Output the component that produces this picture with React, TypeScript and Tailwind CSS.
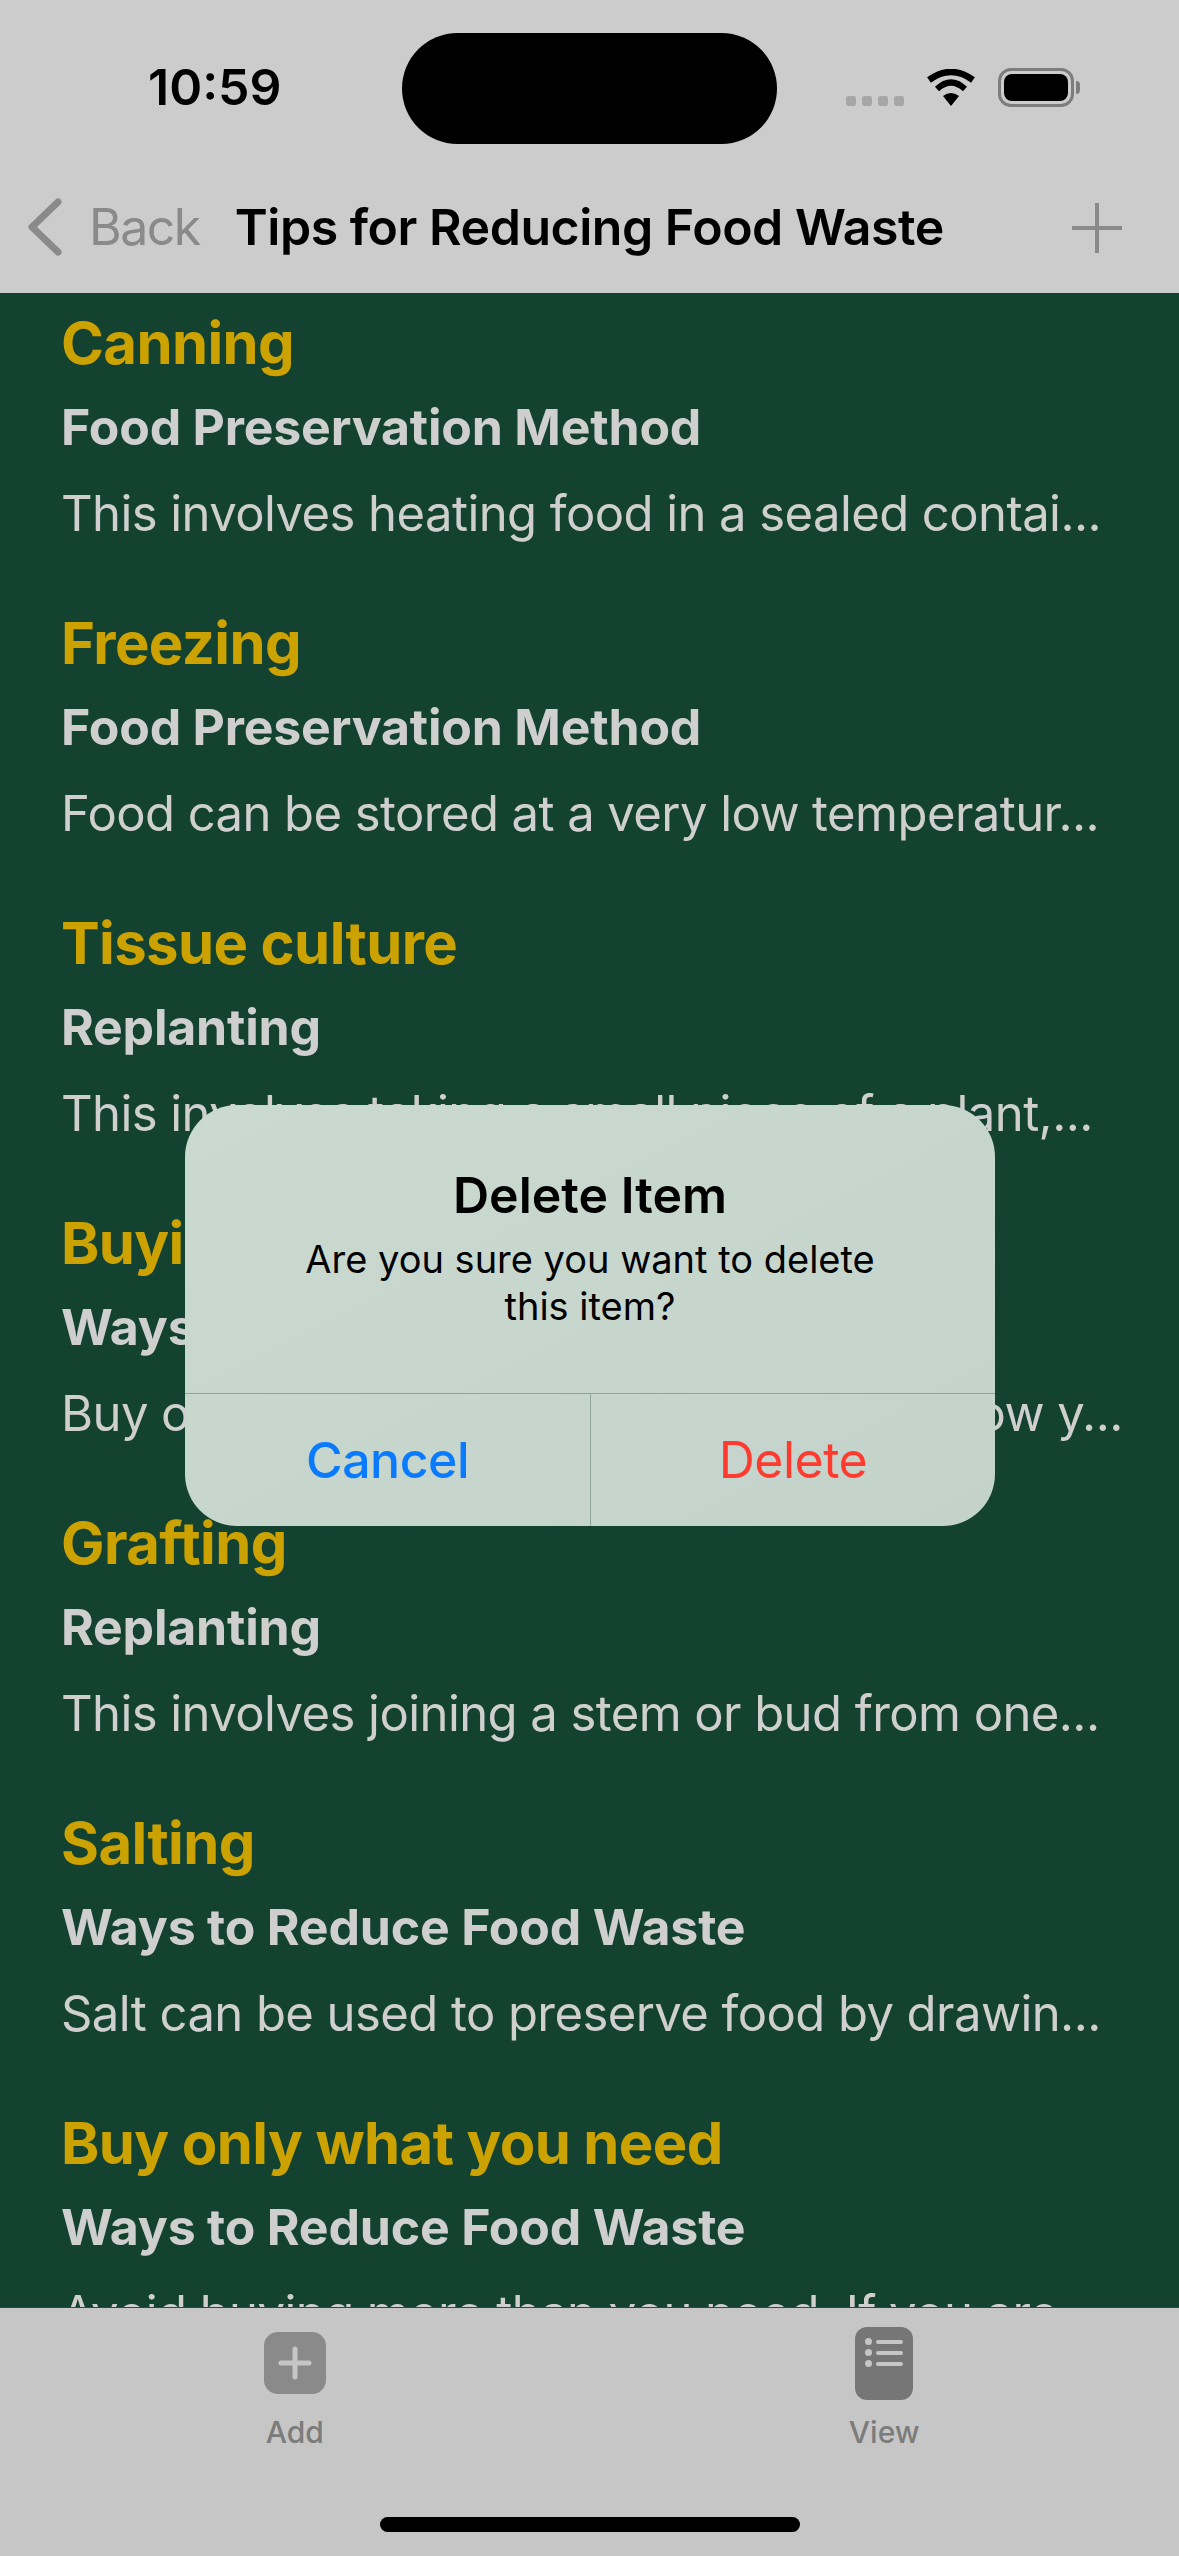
const tips = [
  { title: "Canning", category: "Food Preservation Method", body: "This involves heating food in a sealed contai..." },
  { title: "Freezing", category: "Food Preservation Method", body: "Food can be stored at a very low temperatur..." },
  { title: "Tissue culture", category: "Replanting", body: "This involves taking a small piece of a plant,..." },
  { title: "Buying in bulk", category: "Ways to Reduce Food Waste", body: "Buy on sale or in large amounts if you know y..." },
  { title: "Grafting", category: "Replanting", body: "This involves joining a stem or bud from one..." },
  { title: "Salting", category: "Ways to Reduce Food Waste", body: "Salt can be used to preserve food by drawin..." },
  { title: "Buy only what you need", category: "Ways to Reduce Food Waste", body: "Avoid buying more than you need. If you are" },
];

function StatusBar() {
  return (
    <div className="h-[168px] flex items-start">
      <div className="w-[402px] pt-[60px] pl-[148px] text-[50px] leading-[54px] font-semibold text-black">10:59</div>
      <div className="mt-[33px] w-[375px] h-[111px] rounded-full bg-black" />
      <div className="flex items-start pl-[69px]">
        <div className="flex gap-[6px] mt-[96px]">
          <span className="w-[10px] h-[10px] rounded-[3px] bg-[#a6a6a6]" />
          <span className="w-[10px] h-[10px] rounded-[3px] bg-[#a6a6a6]" />
          <span className="w-[10px] h-[10px] rounded-[3px] bg-[#a6a6a6]" />
          <span className="w-[10px] h-[10px] rounded-[3px] bg-[#a6a6a6]" />
        </div>
        <svg className="ml-[22px] mt-[69px]" width="50" height="37" viewBox="0 0 50 37">
          <path d="M25 37 L17 27 Q25 21 33 27 Z" fill="#000" />
          <path d="M11 20 Q25 7 39 20" fill="none" stroke="#000" strokeWidth="6" />
          <path d="M3 11 Q25 -5 47 11" fill="none" stroke="#000" strokeWidth="6.5" />
        </svg>
        <div className="ml-[22px] mt-[68px] w-[76px] h-[39px] rounded-[13px] border-[3px] border-[#7d7d7d] p-[3px]">
          <div className="w-full h-full rounded-[8px] bg-black" />
        </div>
        <div className="mt-[81px] ml-[2px] w-[4px] h-[13px] rounded-r-full bg-[#7d7d7d]" />
      </div>
    </div>
  );
}

function NavBar() {
  return (
    <div className="h-[125px] flex items-start">
      <svg className="ml-[26px] mt-[30px]" width="36" height="58" viewBox="0 0 36 58">
        <path d="M32 4 L6 29 L32 54" fill="none" stroke="#8a8a8a" strokeWidth="7" strokeLinecap="round" strokeLinejoin="round" />
      </svg>
      <span className="ml-[27px] mt-[29px] text-[50px] leading-[60px] tracking-[-1.5px] text-[#8a8a8a]">Back</span>
      <span className="ml-[35px] mt-[29px] text-[50px] leading-[60px] font-semibold tracking-[-0.47px] text-black whitespace-nowrap">Tips for Reducing Food Waste</span>
      <svg className="ml-[126px] mt-[33px]" width="54" height="54" viewBox="0 0 54 54">
        <path d="M27 2 V52 M2 27 H52" fill="none" stroke="#8a8a8a" strokeWidth="4" />
      </svg>
    </div>
  );
}

function TabBar() {
  return (
    <div className="h-[249px] bg-[#c6c6c6] border-t border-[#2b4a3a] flex flex-col">
      <div className="h-[209px] grid grid-cols-2">
        <div className="flex flex-col items-center">
          <div className="h-[106px] pt-[24px]">
            <div className="w-[62px] h-[62px] rounded-[14px] bg-[#8a8a8a] flex items-center justify-center">
              <svg width="34" height="34" viewBox="0 0 34 34">
                <path d="M17 3 V31 M3 17 H31" fill="none" stroke="#c6c6c6" strokeWidth="5" strokeLinecap="round" />
              </svg>
            </div>
          </div>
          <span className="text-[30px] leading-[36px] font-medium text-[#7c7c7c]">Add</span>
        </div>
        <div className="flex flex-col items-center">
          <div className="h-[106px] pt-[19px]">
            <div className="w-[58px] h-[73px] rounded-[12px] bg-[#767676] flex flex-col gap-[6px] pt-[12px] px-[10px]">
              <div className="flex items-center gap-[4px] h-[5px]"><span className="w-[7px] h-[7px] rounded-full bg-[#c6c6c6]" /><span className="flex-1 h-[4px] rounded-full bg-[#c6c6c6]" /></div>
              <div className="flex items-center gap-[4px] h-[5px]"><span className="w-[7px] h-[7px] rounded-full bg-[#c6c6c6]" /><span className="flex-1 h-[4px] rounded-full bg-[#c6c6c6]" /></div>
              <div className="flex items-center gap-[4px] h-[5px]"><span className="w-[7px] h-[7px] rounded-full bg-[#c6c6c6]" /><span className="flex-1 h-[4px] rounded-full bg-[#c6c6c6]" /></div>
            </div>
          </div>
          <span className="text-[30px] leading-[36px] font-medium text-[#7c7c7c]">View</span>
        </div>
      </div>
      <div className="w-[420px] h-[15px] mx-auto rounded-full bg-black" />
    </div>
  );
}

function DeleteDialog() {
  return (
    <div className="absolute left-[185px] top-[1105px] w-[810px] h-[421px] rounded-[52px] overflow-hidden bg-gradient-to-br from-[#cbdad0] to-[#c3d3cb] flex flex-col">
      <div className="h-[288px] flex flex-col items-center pt-[60px] text-black">
        <div className="text-[50px] leading-[60px] font-semibold">Delete Item</div>
        <div className="mt-[11px] text-[38px] leading-[47px] text-center w-[620px]">Are you sure you want to delete this item?</div>
      </div>
      <div className="flex-1 grid grid-cols-[406px_1fr] border-t border-[#8fa69b]">
        <div className="flex items-center justify-center border-r border-[#8fa69b] text-[50px] font-medium tracking-[-0.5px] text-[#0a7aff]">Cancel</div>
        <div className="flex items-center justify-center text-[50px] tracking-[-0.5px] text-[#ff3b30]">Delete</div>
      </div>
    </div>
  );
}

export default function App() {
  return (
    <div className="relative w-[1179px] h-[2556px] flex flex-col overflow-hidden bg-[#cccccc] font-['Inter',sans-serif]">
      <StatusBar />
      <NavBar />
      <div className="flex-1 overflow-hidden bg-[#144230] px-[61px] pt-[14px]">
        {tips.map((tip) => (
          <div key={tip.title} className="h-[300px] whitespace-nowrap">
            <div className="text-[58px] leading-[72px] font-bold tracking-[-0.6px] text-[#cba200]">{tip.title}</div>
            <div className="mt-[18px] text-[50px] leading-[60px] font-bold tracking-[-0.2px] text-[#cfcfcf]">{tip.category}</div>
            <div className="mt-[27px] text-[49px] leading-[60px] tracking-[-0.57px] text-[#cfcfcf]">{tip.body}</div>
          </div>
        ))}
      </div>
      <TabBar />
      <DeleteDialog />
    </div>
  );
}
